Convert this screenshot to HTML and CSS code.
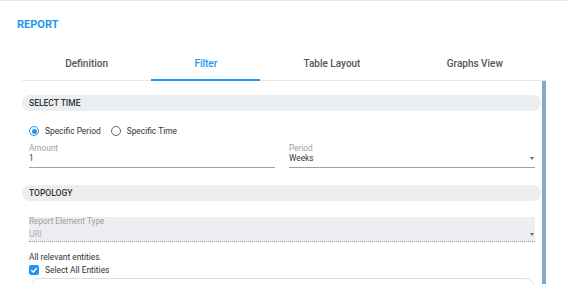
FILE: index.html
```html
<!DOCTYPE html>
<html lang="en">
<head>
    <meta charset="UTF-8">
    <meta name="viewport" content="width=device-width, initial-scale=1.0">
    <title>Report</title>
    <link rel="stylesheet" href="styles.css">
</head>
<body>
    <div class="report">
        <h1 class="report-title">REPORT</h1>

        <div class="report-body">
            <div class="tabs">
                <div class="tab">Definition</div>
                <div class="tab active">Filter</div>
                <div class="tab">Table Layout</div>
                <div class="tab">Graphs View</div>
            </div>

            <div class="scroll">
                <div class="scroll-content">
                    <!-- Select time -->
                    <div class="section-bar">Select Time</div>
                    <div class="section-body">
                        <div class="radio-row">
                            <label class="radio"><span class="radio-dot checked"></span>Specific Period</label>
                            <label class="radio"><span class="radio-dot"></span>Specific Time</label>
                        </div>
                        <div class="field-row">
                            <div class="field">
                                <div class="field-label">Amount</div>
                                <div class="field-value">1</div>
                            </div>
                            <div class="field">
                                <div class="field-label">Period</div>
                                <div class="field-value select">Weeks<span class="arrow"></span></div>
                            </div>
                        </div>
                    </div>

                    <!-- Topology -->
                    <div class="section-bar topology">Topology</div>
                    <div class="section-body">
                        <div class="field disabled">
                            <div class="field-label">Report Element Type</div>
                            <div class="field-value select">URI<span class="arrow"></span></div>
                        </div>
                        <p class="note">All relevant entities.</p>
                        <label class="checkbox">
                            <span class="check-box">
                                <svg viewBox="0 0 10 10" width="10" height="10"><path d="M2.3 5.2 L4.2 7 L7.8 3.2" fill="none" stroke="#fff" stroke-width="1.3"/></svg>
                            </span>
                            Select All Entities
                        </label>
                        <div class="entity-box"></div>
                    </div>
                </div>
                <div class="scrollbar"></div>
            </div>
        </div>
    </div>
</body>
</html>
```

FILE: styles.css
```css
html, body {
    margin: 0;
    background: #fff;
}

body {
    font-family: Roboto, "Noto Sans", Arial, sans-serif;
    color: #333;
    overflow: hidden;
}

.report {
    height: 284px;
    border-top: 1px solid #e6e6e6;
    box-sizing: border-box;
    padding-left: 17px;
}

.report-title {
    margin: 17px 0 16px;
    font-size: 11px;
    line-height: 14px;
    font-weight: 700;
    color: #2196f3;
}

.report-body {
    margin-left: 5px;
    width: 524px;
}

.tabs {
    display: flex;
    width: 524px;
    border-bottom: 1px solid #e8e8e8;
}

.tab {
    flex: 1 1 auto;
    text-align: center;
    padding: 10px 0;
    font-size: 10px;
    line-height: 12px;
    font-weight: 500;
    color: #555;
}

.tab.active {
    color: #2196f3;
    padding-bottom: 9px;
    border-bottom: 2px solid #2196f3;
    margin-bottom: -1px;
}

.scroll {
    display: flex;
    height: 210px;
    overflow: hidden;
}

.scroll-content {
    width: 519px;
    flex: none;
}

.scrollbar {
    width: 4px;
    margin-left: 1px;
    background: #8aa8c0;
}

.section-bar {
    margin-top: 14px;
    height: 16px;
    line-height: 16px;
    padding-left: 7px;
    background: #eceff1;
    border-radius: 8px;
    font-size: 8.5px;
    font-weight: 500;
    text-transform: uppercase;
    color: #333;
}

.section-bar.topology {
    margin-top: 17px;
}

.section-body {
    padding: 0 6px 0 7px;
}

.radio-row {
    display: flex;
    gap: 10px;
    margin-top: 14px;
}

.radio {
    display: flex;
    align-items: center;
    gap: 6px;
    font-size: 8.4px;
    line-height: 12px;
    color: #333;
}

.radio-dot {
    width: 8px;
    height: 8px;
    border: 1px solid #666;
    border-radius: 50%;
    display: flex;
    align-items: center;
    justify-content: center;
}

.radio-dot.checked {
    border-color: #2196f3;
}

.radio-dot.checked::after {
    content: "";
    width: 5px;
    height: 5px;
    border-radius: 50%;
    background: #2196f3;
}

.field-row {
    display: flex;
    gap: 14px;
    margin-top: 7px;
}

.field {
    flex: 1;
    padding-bottom: 4px;
    border-bottom: 1px solid #a0a0a0;
}

.field-label {
    font-size: 8.2px;
    line-height: 9px;
    color: #9e9e9e;
}

.field-value {
    font-size: 8.3px;
    line-height: 10px;
    color: #333;
}

.select {
    display: flex;
    justify-content: space-between;
    align-items: center;
}

.arrow {
    width: 0;
    height: 0;
    margin-right: 1px;
    border-left: 2.5px solid transparent;
    border-right: 2.5px solid transparent;
    border-top: 3px solid #6a6a6a;
}

.field.disabled {
    margin-top: 16px;
    padding-bottom: 2px;
    background: #eceef1;
    border-bottom: 1px dotted #9a9a9a;
}

.field.disabled .field-value {
    margin-top: 3px;
    color: #b0b0b0;
}

.note {
    margin: 9px 0 0;
    font-size: 8.4px;
    line-height: 12px;
    color: #333;
}

.checkbox {
    display: flex;
    align-items: center;
    gap: 6px;
    margin-top: 1px;
    font-size: 8.4px;
    line-height: 12px;
    color: #333;
}

.check-box {
    width: 10px;
    height: 10px;
    border-radius: 2px;
    background: #2196f3;
    display: flex;
}

.entity-box {
    margin: 2px 0 0 1px;
    height: 30px;
    border: 1px solid #dedede;
    border-radius: 10px;
}
```
